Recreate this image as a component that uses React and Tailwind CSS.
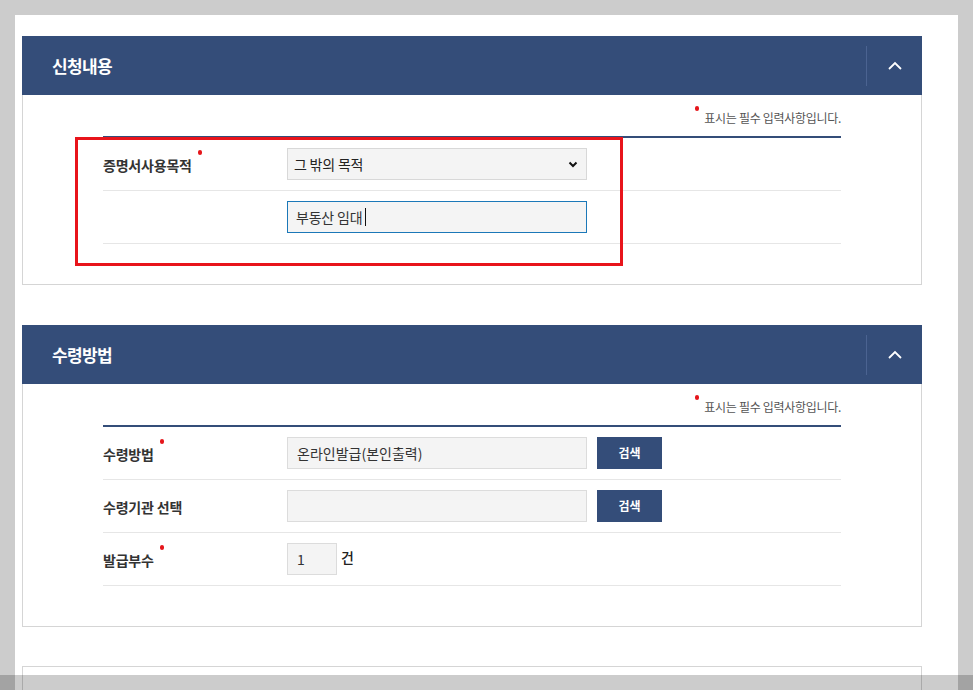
import { useState } from "react";

const Dot = () => (
  <span className="absolute -right-[10px] -top-[5px] w-[4px] h-[5px] rounded-full bg-[#e5161b]" />
);

const Label = ({ text, required }) => (
  <div className="w-[184px] shrink-0">
    <span className="relative inline-block text-[14px] tracking-[-0.2px] font-bold text-[#333] leading-[20px]">
      {text}
      {required && <Dot />}
    </span>
  </div>
);

const Row = ({ children }) => (
  <div className="h-[53px] flex items-center border-b border-[#e6e6e6]">{children}</div>
);

const SectionHeader = ({ title }) => (
  <div className="h-[59px] bg-[#344d79] flex items-center">
    <h2 className="flex-1 pl-[30px] text-white text-[17px] font-bold tracking-[-0.6px] leading-none">
      {title}
    </h2>
    <div className="h-[40px] w-px bg-[#4b6391]" />
    <button className="w-[55px] h-full flex items-center justify-center">
      <svg width="14" height="9" viewBox="0 0 14 9" fill="none">
        <path d="M1 8 L7 2 L13 8" stroke="white" strokeWidth="1.8" />
      </svg>
    </button>
  </div>
);

const Notice = () => (
  <div className="h-[41px] flex items-center justify-end pt-[4px]">
    <span className="relative text-[12px] tracking-[-0.3px] text-[#555] leading-none pl-[9px]">
      <span className="absolute left-[0px] -top-[6px] w-[4px] h-[5px] rounded-full bg-[#e5161b]" />
      표시는 필수 입력사항입니다.
    </span>
  </div>
);

const Box = ({ children }) => (
  <div className="h-[32px] bg-[#f4f4f4] border border-[#dcdcdc] flex items-center">{children}</div>
);

const SearchBtn = () => (
  <button className="ml-[10px] w-[65px] h-[32px] bg-[#344d79] text-white text-[12px] font-bold leading-none">
    검색
  </button>
);

export default function App() {
  const [purpose] = useState("그 밖의 목적");

  return (
    <div className="relative w-[973px] h-[690px] overflow-hidden bg-[#cccccc] pt-[15px] pl-[15px] font-['Noto_Sans_CJK_KR','Noto_Sans',sans-serif]">
      <div className="w-[943px] h-[700px] bg-white pt-[21px] pl-[7px]">
        {/* 신청내용 */}
        <section className="w-[900px]">
          <SectionHeader title="신청내용" />
          <div className="border-x border-b border-[#d5d5d5] px-[80px] pb-[40px]">
            <Notice />
            <div className="relative border-t-2 border-[#344d79]">
              <Row>
                <Label text="증명서사용목적" required />
                <div className="w-[300px] h-[32px] bg-[#f4f4f4] border border-[#d8d8d8] flex items-center justify-between pl-[6px] pr-[8px]">
                  <span className="text-[14px] tracking-[-0.2px] text-[#222] leading-none">{purpose}</span>
                  <svg width="10" height="7" viewBox="0 0 10 7" fill="none">
                    <path d="M1.5 1.5 L5 5 L8.5 1.5" stroke="#111" strokeWidth="2" />
                  </svg>
                </div>
              </Row>
              <Row>
                <div className="w-[184px] shrink-0" />
                <div className="w-[300px] h-[32px] bg-[#f4f4f4] border border-[#1b78b8] flex items-center pl-[8px]">
                  <span className="text-[14px] tracking-[-0.2px] text-[#333] leading-none">부동산 임대</span>
                  <span className="ml-[3px] w-px h-[18px] bg-[#111]" />
                </div>
              </Row>
              {/* red highlight around the purpose rows */}
              <div className="absolute -left-[28px] top-[-1px] w-[548px] h-[129px] border-[3px] border-[#e8141b] pointer-events-none" />
            </div>
          </div>
        </section>

        {/* 수령방법 */}
        <section className="w-[900px] mt-[40px]">
          <SectionHeader title="수령방법" />
          <div className="border-x border-b border-[#d5d5d5] px-[80px] pb-[40px]">
            <Notice />
            <div className="border-t-2 border-[#344d79]">
              <Row>
                <Label text="수령방법" required />
                <div className="w-[300px]">
                  <Box>
                    <span className="pl-[9px] text-[14px] text-[#333] leading-none">온라인발급(본인출력)</span>
                  </Box>
                </div>
                <SearchBtn />
              </Row>
              <Row>
                <Label text="수령기관 선택" />
                <div className="w-[300px]">
                  <Box />
                </div>
                <SearchBtn />
              </Row>
              <Row>
                <Label text="발급부수" required />
                <div className="w-[50px]">
                  <Box>
                    <span className="pl-[9px] text-[14px] text-[#333] leading-none">1</span>
                  </Box>
                </div>
                <span className="ml-[4px] -mt-[4px] text-[14px] font-medium text-[#222] leading-none">건</span>
              </Row>
            </div>
          </div>
        </section>

        <div className="w-[900px] h-[80px] mt-[39px] border-x border-t border-[#d5d5d5]" />
      </div>
      <div className="absolute left-0 right-0 top-[675px] h-[15px] bg-black/20" />
    </div>
  );
}
